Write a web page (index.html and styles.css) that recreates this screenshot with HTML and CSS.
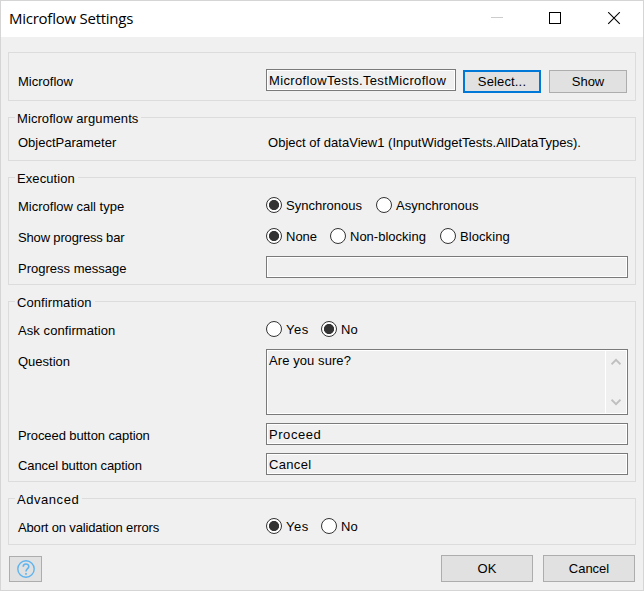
FILE: index.html
```html
<!DOCTYPE html>
<html lang="en">
<head>
<meta charset="utf-8">
<title>Microflow Settings</title>
<link rel="stylesheet" href="styles.css">
</head>
<body>
<div class="window">
  <header class="titlebar">
    <h1 class="title">Microflow Settings</h1>
    <svg class="controls" width="134" height="14" viewBox="0 0 134 14" fill="none">
      <path d="M1 5.5H13" stroke="#ccc"/>
      <rect x="59.5" y="0.5" width="11" height="11" stroke="#000"/>
      <path d="M118.2 .2L129.8 11.8M129.8 .2L118.2 11.8" stroke="#000" stroke-width="1.1"/>
    </svg>
  </header>
  <main class="content">
    <section class="group g-flow">
      <div class="row">
        <span class="label">Microflow</span>
        <div class="field short ls-wide">MicroflowTests.TestMicroflow</div>
        <button class="btn small focus">Select...</button>
        <button class="btn small">Show</button>
      </div>
    </section>
    <section class="group g-args">
      <h2 class="legend">Microflow arguments</h2>
      <div class="row text-row">
        <span class="label">ObjectParameter</span>
        <span class="value">Object of dataView1 (InputWidgetTests.AllDataTypes).</span>
      </div>
    </section>
    <section class="group g-exec">
      <h2 class="legend">Execution</h2>
      <div class="row radios">
        <span class="label">Microflow call type</span>
        <span class="radio w110"><i class="dot on"></i>Synchronous</span>
        <span class="radio"><i class="dot"></i>Asynchronous</span>
      </div>
      <div class="row radios next">
        <span class="label ls-tight">Show progress bar</span>
        <span class="radio w64"><i class="dot on"></i>None</span>
        <span class="radio w110"><i class="dot"></i>Non-blocking</span>
        <span class="radio ls-slight"><i class="dot"></i>Blocking</span>
      </div>
      <div class="row after-radios">
        <span class="label">Progress message</span>
        <div class="field"></div>
      </div>
    </section>
    <section class="group g-conf">
      <h2 class="legend">Confirmation</h2>
      <div class="row radios">
        <span class="label ls-slight">Ask confirmation</span>
        <span class="radio w55 ls-wider"><i class="dot"></i>Yes</span>
        <span class="radio"><i class="dot on"></i>No</span>
      </div>
      <div class="row after-radios">
        <span class="label">Question</span>
        <div class="field area ls-slight">
          <span>Are you sure?</span>
          <div class="scrollbar">
            <svg width="10" height="8" viewBox="0 0 10 8" fill="none" stroke="#bfbfbf" stroke-width="2"><path d="M.5 6.3L5 1.8L9.5 6.3"/></svg>
            <svg width="10" height="8" viewBox="0 0 10 8" fill="none" stroke="#bfbfbf" stroke-width="2"><path d="M.5 1.7L5 6.2L9.5 1.7"/></svg>
          </div>
        </div>
      </div>
      <div class="row after-field">
        <span class="label ls-snug">Proceed button caption</span>
        <div class="field ls-wider">Proceed</div>
      </div>
      <div class="row after-field">
        <span class="label ls-snug">Cancel button caption</span>
        <div class="field ls-wide">Cancel</div>
      </div>
    </section>
    <section class="group g-adv">
      <h2 class="legend ls-wider">Advanced</h2>
      <div class="row radios">
        <span class="label ls-tight">Abort on validation errors</span>
        <span class="radio w55 ls-wider"><i class="dot on"></i>Yes</span>
        <span class="radio"><i class="dot"></i>No</span>
      </div>
    </section>
    <footer class="footer">
      <button class="btn help" aria-label="Help">
        <svg width="18" height="18" viewBox="0 0 18 18" fill="none" stroke="#5eb4f0">
          <circle cx="9" cy="9" r="8.2" stroke-width="1.4"/>
          <path d="M6.2 6.8C6.2 3.2 11.8 3.2 11.8 6.6C11.8 8.8 9 8.7 9 11.6M9 13V14.8" stroke-width="1.6"/>
        </svg>
      </button>
      <button class="btn large">OK</button>
      <button class="btn large">Cancel</button>
    </footer>
  </main>
</div>
</body>
</html>
```

FILE: styles.css
```css
* { box-sizing: border-box; }
body {
  margin: 0;
  font: 13px/15px "Liberation Sans", Arial, sans-serif;
  color: #000;
}
.window {
  width: 644px;
  height: 591px;
  border: 1px solid #d5d5d5;
  background: #f0f0f0;
  display: flex;
  flex-direction: column;
}
.titlebar {
  height: 36px;
  background: #fff;
  display: flex;
  justify-content: space-between;
  padding: 0 19px 0 8px;
}
.title {
  margin: 7px 0 0;
  font: 400 15px/20px "Open Sans", sans-serif;
  letter-spacing: -0.25px;
  white-space: nowrap;
}
.controls { margin-top: 11px; }
.content { padding: 15px 7px 0; }
.group {
  border: 1px solid #dcdcdc;
  width: 628px;
  margin-bottom: 16px;
  padding: 0 7px 0 9px;
}
.g-flow { height: 49px; padding-top: 16px; }
.g-args { height: 44px; }
.g-exec { height: 108px; }
.g-conf { height: 181px; }
.g-adv { height: 47px; margin-bottom: 10px; }
.legend {
  width: fit-content;
  height: 12px;
  margin: -7px 0 -5px -3px;
  padding: 0 3px 0 2px;
  background: #f0f0f0;
  font-size: 13px;
  font-weight: 400;
  line-height: 15px;
  letter-spacing: 0.08px;
  white-space: nowrap;
}
.row { display: flex; align-items: flex-start; white-space: nowrap; }
.label { width: 248px; flex: none; padding-top: 5px; }
.text-row { padding-top: 17px; }
.text-row .label { padding-top: 0; }
.value { margin-left: 2px; letter-spacing: 0.02px; }
.radios { height: 35px; padding-top: 19px; }
.radios .label { padding-top: 2px; }
.radios.next { height: 31px; padding-top: 15px; }
.after-radios { padding-top: 12px; }
.after-field { padding-top: 8px; }
.radio { display: flex; gap: 4px; height: 16px; line-height: 17px; }
.w55 { width: 55px; }
.w64 { width: 64px; }
.w110 { width: 110px; }
.dot {
  flex: none;
  width: 16px;
  height: 16px;
  border: 1px solid #333;
  border-radius: 50%;
  background: #fff;
}
.dot.on { background: radial-gradient(circle, #333 4.7px, #fff 5.4px); }
.field {
  width: 362px;
  height: 22px;
  border: 1px solid #7a7a7a;
  box-shadow: inset 0 0 0 1px #fff;
  padding: 3px 1px 1px 2px;
}
.short { width: 190px; margin-right: 7px; }
.ls-tight { letter-spacing: -0.16px; }
.ls-snug { letter-spacing: -0.09px; }
.ls-slight { letter-spacing: 0.08px; }
.ls-wide { letter-spacing: 0.34px; }
.ls-wider { letter-spacing: 0.55px; }
.area {
  height: 66px;
  display: flex;
  justify-content: space-between;
  padding-top: 1px;
}
.area span { padding-top: 2px; }
.scrollbar {
  width: 21px;
  border-left: 1px solid #fff;
  padding: 7px 0 7px 5px;
  display: flex;
  flex-direction: column;
  justify-content: space-between;
}
.btn {
  border: 1px solid #adadad;
  background: #e1e1e1;
  color: #000;
  font: inherit;
  padding: 0;
}
.small { width: 78px; height: 23px; margin-top: 1px; }
.focus { border: 2px solid #0078d7; margin-right: 8px; letter-spacing: 0.15px; }
.footer { display: flex; padding: 0 1px; gap: 10px; }
.help {
  width: 33px;
  height: 26px;
  margin: 1px auto 0 0;
  display: grid;
  place-items: center;
}
.large { width: 92px; height: 27px; }
```
